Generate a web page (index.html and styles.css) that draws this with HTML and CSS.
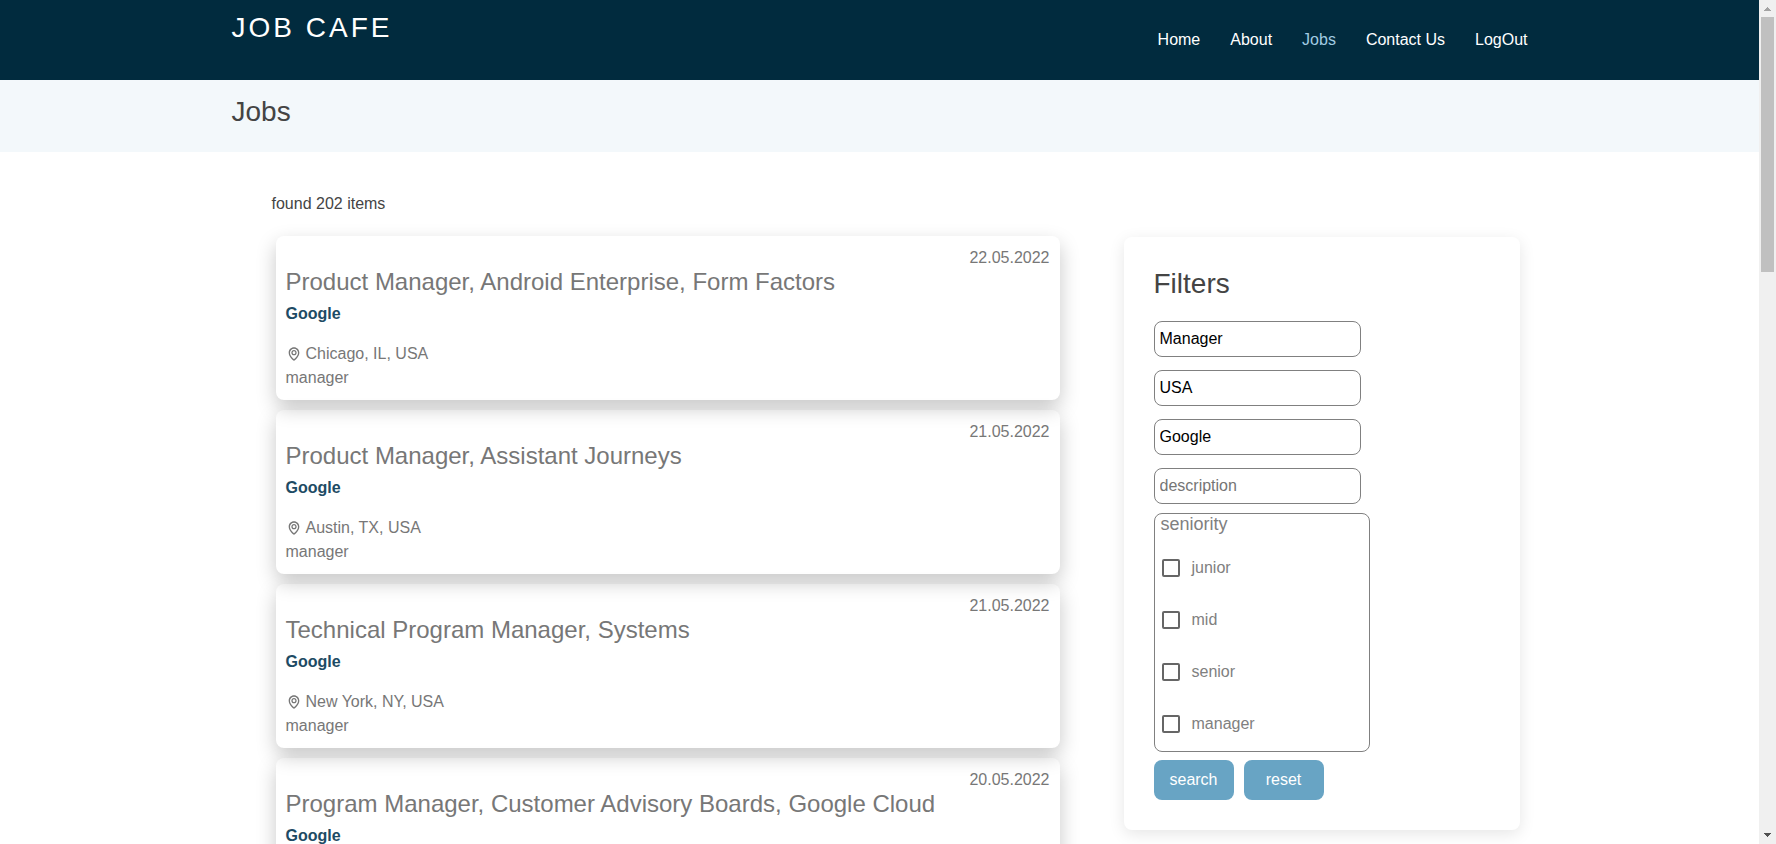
FILE: index.html
```html
<!DOCTYPE html>
<html lang="en">
<head>
<meta charset="utf-8">
<meta name="viewport" content="width=device-width, initial-scale=1">
<title>Job Cafe - Jobs</title>
<link rel="stylesheet" href="styles.css">
</head>
<body>
<svg class="sprite" aria-hidden="true">
  <symbol id="pin" viewBox="0 0 24 24">
    <path d="M12 14c2.206 0 4-1.794 4-4s-1.794-4-4-4-4 1.794-4 4 1.794 4 4 4zm0-6c1.103 0 2 .897 2 2s-.897 2-2 2-2-.897-2-2 .897-2 2-2z"/>
    <path d="M11.42 21.814a.998.998 0 0 0 1.16 0C12.884 21.599 20.029 16.44 20 10c0-4.411-3.589-8-8-8S4 5.589 4 9.995c-.029 6.445 7.116 11.604 7.42 11.819zM12 4c3.309 0 6 2.691 6 6 .021 4.438-4.388 8.423-6 9.73-1.611-1.308-6.021-5.294-6-9.73 0-3.309 2.691-6 6-6z"/>
  </symbol>
</svg>
<div class="page">
  <header class="header">
    <div class="container header-inner">
      <a class="logo" href="#">JOB CAFE</a>
      <nav class="nav">
        <a href="#">Home</a>
        <a href="#">About</a>
        <a class="active" href="#" aria-current="page">Jobs</a>
        <a href="#">Contact Us</a>
        <a href="#">LogOut</a>
      </nav>
    </div>
  </header>
  <section class="title-bar">
    <div class="container">
      <h1 class="heading">Jobs</h1>
    </div>
  </section>
  <main class="content">
    <section class="results">
      <p class="found">found 202 items</p>
      <div class="list">
        <article class="card">
          <time class="date" datetime="2022-05-22">22.05.2022</time>
          <h2 class="job-title">Product Manager, Android Enterprise, Form Factors</h2>
          <p class="company">Google</p>
          <p class="place"><svg class="pin"><use href="#pin"/></svg>Chicago, IL, USA</p>
          <p class="level">manager</p>
        </article>
        <article class="card">
          <time class="date" datetime="2022-05-21">21.05.2022</time>
          <h2 class="job-title">Product Manager, Assistant Journeys</h2>
          <p class="company">Google</p>
          <p class="place"><svg class="pin"><use href="#pin"/></svg>Austin, TX, USA</p>
          <p class="level">manager</p>
        </article>
        <article class="card">
          <time class="date" datetime="2022-05-21">21.05.2022</time>
          <h2 class="job-title">Technical Program Manager, Systems</h2>
          <p class="company">Google</p>
          <p class="place"><svg class="pin"><use href="#pin"/></svg>New York, NY, USA</p>
          <p class="level">manager</p>
        </article>
        <article class="card">
          <time class="date" datetime="2022-05-20">20.05.2022</time>
          <h2 class="job-title">Program Manager, Customer Advisory Boards, Google Cloud</h2>
          <p class="company">Google</p>
        </article>
      </div>
    </section>
    <aside class="filters">
      <h2 class="heading">Filters</h2>
      <form class="filter-form">
        <div class="fields">
          <input class="field" type="text" aria-label="title" placeholder="title" value="Manager">
          <input class="field" type="text" aria-label="location" placeholder="location" value="USA">
          <input class="field" type="text" aria-label="company" placeholder="company" value="Google">
          <input class="field" type="text" aria-label="description" placeholder="description">
        </div>
        <div class="seniority" role="group" aria-labelledby="seniority-label">
          <p class="seniority-label" id="seniority-label">seniority</p>
          <label class="option"><input class="check" type="checkbox" name="junior">junior</label>
          <label class="option"><input class="check" type="checkbox" name="mid">mid</label>
          <label class="option"><input class="check" type="checkbox" name="senior">senior</label>
          <label class="option"><input class="check" type="checkbox" name="manager">manager</label>
        </div>
        <div class="actions">
          <button class="btn" type="submit">search</button>
          <button class="btn" type="reset">reset</button>
        </div>
      </form>
    </aside>
  </main>
</div>
<div class="scrollbar" aria-hidden="true">
  <svg class="arrow arrow-up" viewBox="0 0 17 17" shape-rendering="crispEdges"><path d="M8 7h1v1h1v1h1v1h1v1H5v-1h1V9h1V8h1z"/></svg>
  <div class="track"><div class="thumb"></div></div>
  <svg class="arrow arrow-down" viewBox="0 0 17 17" shape-rendering="crispEdges"><path d="M5 6h7v1h-1v1h-1v1H9v1H8V9H7V8H6V7H5z"/></svg>
</div>
</body>
</html>
```
FILE: styles.css
```css
* {
  box-sizing: border-box;
}

body {
  margin: 0;
  height: 100vh;
  display: flex;
  overflow: hidden;
  background: #fff;
  color: #444;
  font: 16px/24px "Liberation Sans", Arial, sans-serif;
}

h1, h2, p {
  margin: 0;
  font-weight: 400;
}

a {
  color: inherit;
  text-decoration: none;
}

.sprite {
  position: absolute;
  width: 0;
  height: 0;
}

.page {
  flex: 1;
  min-width: 0;
  overflow-y: auto;
  scrollbar-width: none;
}

.container {
  max-width: 1320px;
  margin: 0 auto;
  padding: 0 12px;
}

.header {
  background: #012b3e;
  color: #fff;
}

.header-inner {
  min-height: 80px;
  display: flex;
  align-items: center;
  justify-content: space-between;
}

.logo {
  align-self: flex-start;
  margin-top: 11px;
  font-size: 28px;
  line-height: 34px;
  letter-spacing: 3px;
}

.nav {
  display: flex;
  flex-wrap: wrap;
  gap: 0 30px;
}

.nav .active {
  color: #a2cce3;
}

.title-bar {
  background: #f3f8fb;
  padding: 15px 0 23px;
}

.heading {
  font-size: 28px;
  line-height: 34px;
}

.content {
  max-width: 1320px;
  margin: 0 auto;
  padding: 40px 20px 40px 52px;
  display: grid;
  grid-template-columns: minmax(0, 1fr) 396px;
  align-items: start;
  gap: 64px;
}

.list {
  display: grid;
  gap: 10px;
  padding: 20px 0 0 4px;
}

.card {
  min-height: 164px;
  display: flex;
  flex-direction: column;
  padding: 12px 10px 10px;
  border-radius: 8px;
  box-shadow: 0 8px 20px rgba(0, 0, 0, 0.22);
  color: #777;
}

.date {
  align-self: flex-end;
  line-height: 20px;
}

.job-title {
  font-size: 24px;
  line-height: 28px;
}

.company {
  margin: 6px 0 16px;
  color: #1e4b64;
  font-weight: 700;
}

.place {
  display: flex;
  align-items: center;
  gap: 4px;
}

.pin {
  width: 16px;
  height: 16px;
  fill: currentColor;
}

.filters {
  margin-top: 45px;
  padding: 30px;
  border-radius: 8px;
  box-shadow: 0 4px 16px rgba(0, 0, 0, 0.1);
}

.filter-form {
  margin-top: 20px;
}

.fields {
  display: flex;
  flex-direction: column;
  gap: 13px;
}

.field {
  width: 207px;
  height: 36px;
  padding: 0 5px;
  border: 1px solid #808080;
  border-radius: 8px;
  background: #fff;
  color: #000;
  font: inherit;
}

.field::placeholder {
  color: #757575;
}

.seniority {
  width: 216px;
  margin-top: 9px;
  padding: 0 6px 1px;
  border: 1px solid #808080;
  border-radius: 8px;
  color: #808080;
}

.seniority-label {
  margin-bottom: 8px;
  font-size: 18px;
  line-height: 20px;
}

.option {
  height: 52px;
  display: flex;
  align-items: center;
  gap: 12px;
}

.check {
  appearance: none;
  width: 18px;
  height: 18px;
  margin: 0 0 0 1px;
  border: 2px solid #666;
  border-radius: 2px;
}

.check:checked {
  background: #68a4c4;
}

.actions {
  display: flex;
  gap: 10px;
  margin-top: 8px;
}

.btn {
  width: 80px;
  height: 40px;
  padding: 0;
  border: 0;
  border-radius: 8px;
  background: #68a4c4;
  color: #fff;
  font: inherit;
}

.scrollbar {
  flex: none;
  width: 17px;
  display: flex;
  flex-direction: column;
  background: #f0f0f0;
}

.track {
  flex: 1;
  padding: 0 2px;
}

.thumb {
  height: 255px;
  background: #c0c0c0;
}

.arrow {
  width: 17px;
  height: 17px;
}

.arrow-up {
  fill: #a3a3a3;
}

.arrow-down {
  fill: #505050;
}

@media (max-width: 1000px) {
  .content {
    grid-template-columns: minmax(0, 1fr);
    padding: 40px 20px;
  }

  .filters {
    margin-top: 0;
  }
}
```
